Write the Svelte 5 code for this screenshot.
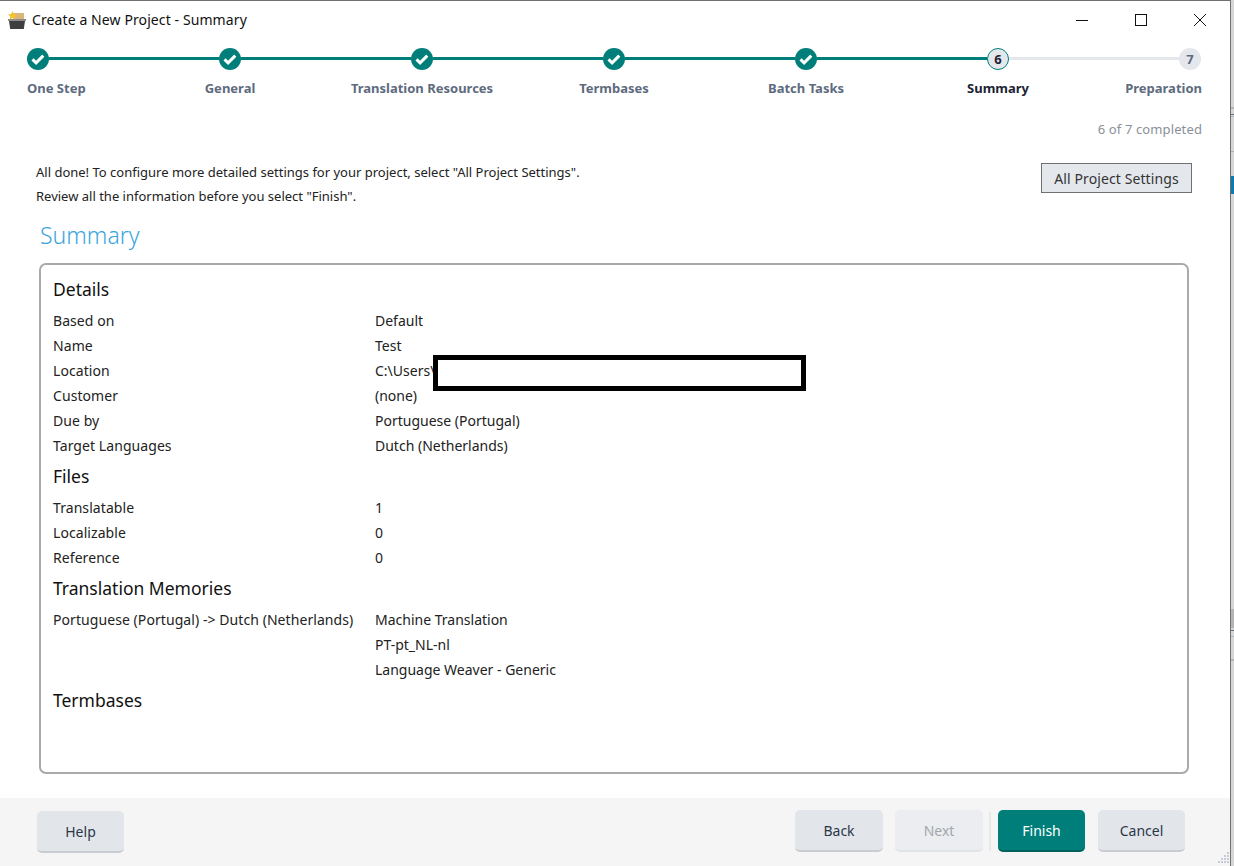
<script>
	const steps = [
		{ name: "One Step", state: "done" },
		{ name: "General", state: "done" },
		{ name: "Translation Resources", state: "done" },
		{ name: "Termbases", state: "done" },
		{ name: "Batch Tasks", state: "done" },
		{ name: "Summary", state: "current", num: 6 },
		{ name: "Preparation", state: "todo", num: 7 }
	];

	const details = [
		["Based on", "Default"],
		["Name", "Test"],
		["Location", "C:\\Users\\"],
		["Customer", "(none)"],
		["Due by", "Portuguese (Portugal)"],
		["Target Languages", "Dutch (Netherlands)"]
	];

	const files = [
		["Translatable", "1"],
		["Localizable", "0"],
		["Reference", "0"]
	];

	const memories = [
		["Portuguese (Portugal) -> Dutch (Netherlands)", "Machine Translation"],
		["", "PT-pt_NL-nl"],
		["", "Language Weaver - Generic"]
	];

	// slivers of whatever window sits behind this one
	const slivers = [
		{ top: 107, h: 2, c: "#b5b5b5" },
		{ top: 114, h: 1, c: "#6a7078" },
		{ top: 116, h: 1, c: "#a9b9c6" },
		{ top: 151, h: 1, c: "#b0b0b0" },
		{ top: 176, h: 18, c: "#0a7ab0" },
		{ top: 609, h: 19, c: "#b4b4b4" },
		{ top: 630, h: 1, c: "#6a7078" },
		{ top: 636, h: 1, c: "#a9b9c6" },
		{ top: 659, h: 2, c: "#b5b5b5" }
	];
</script>

<div class="desktop">
	<div class="window">
		<header class="titlebar">
			<svg class="appicon" width="20" height="20" viewBox="0 0 20 20">
				<path d="M6 3h11v6H6z" fill="#d9b77a" />
				<path d="M1 9h18v2H1z" fill="#8c8c8c" />
				<path d="M2 11h16l-1.2 8H3.2z" fill="#3f3f3f" />
				<path d="M5.5 1l1.4 3 3.1.4-2.3 2.1.6 3.1-2.8-1.6-2.8 1.6.6-3.1L1 4.4 4.1 4z" fill="#f2c230" />
			</svg>
			<span class="title">Create a New Project - Summary</span>
			<div class="winbtns">
				<svg width="14" height="14" viewBox="0 0 14 14"><path d="M1 7.5h12" stroke="#111" stroke-width="1" /></svg>
				<svg width="14" height="14" viewBox="0 0 14 14"><rect x="1.5" y="1.5" width="11" height="11" fill="none" stroke="#111" /></svg>
				<svg width="14" height="14" viewBox="0 0 14 14"><path d="M1 1l12 12M13 1L1 13" stroke="#111" stroke-width="1" /></svg>
			</div>
		</header>

		<ol class="steps">
			{#each steps as step, i}
				{#if i > 0}
					<li class="line" class:off={step.state == "todo"}></li>
				{/if}
				<li class="step {step.state}" class:first={i == 0} class:last={i == steps.length - 1}>
					<span class="dot">
						{#if step.state == "done"}
							<svg width="14" height="14" viewBox="0 0 14 14"><path d="M1.5 7.4l3.6 3.4 7.2-7.2" fill="none" stroke="#fff" stroke-width="3" /></svg>
						{:else}
							{step.num}
						{/if}
					</span>
					<span class="label">{step.name}</span>
				</li>
			{/each}
		</ol>

		<div class="progress">6 of 7 completed</div>

		<div class="intro">
			<div>
				<p>All done! To configure more detailed settings for your project, select "All Project Settings".</p>
				<p>Review all the information before you select "Finish".</p>
			</div>
			<button class="settings">All Project Settings</button>
		</div>

		<h1>Summary</h1>

		<section class="box">
			<h2>Details</h2>
			{#each details as [k, v]}
				<div class="row">
					<span>{k}</span>
					<span class="val">
						{v}
						{#if k == "Location"}<i class="redact"></i>{/if}
					</span>
				</div>
			{/each}
			<h2>Files</h2>
			{#each files as [k, v]}
				<div class="row"><span>{k}</span><span class="val">{v}</span></div>
			{/each}
			<h2>Translation Memories</h2>
			{#each memories as [k, v]}
				<div class="row"><span>{k}</span><span class="val">{v}</span></div>
			{/each}
			<h2>Termbases</h2>
		</section>

		<footer>
			<button class="btn help">Help</button>
			<div class="spacer"></div>
			<button class="btn">Back</button>
			<button class="btn disabled">Next</button>
			<span class="sep"></span>
			<button class="btn primary">Finish</button>
			<button class="btn cancel">Cancel</button>
			<svg class="grip" width="14" height="14" viewBox="0 0 14 14" fill="#c6ccd6">
				<rect x="11" y="1" width="2" height="2" /><rect x="11" y="4" width="2" height="2" /><rect x="8" y="4" width="2" height="2" />
				<rect x="11" y="7" width="2" height="2" /><rect x="8" y="7" width="2" height="2" /><rect x="5" y="7" width="2" height="2" />
				<rect x="11" y="10" width="2" height="2" /><rect x="8" y="10" width="2" height="2" /><rect x="5" y="10" width="2" height="2" /><rect x="2" y="10" width="2" height="2" />
			</svg>
		</footer>
	</div>
	<div class="behind">
		{#each slivers as s}
			<i style="top:{s.top}px;height:{s.h}px;background:{s.c}"></i>
		{/each}
	</div>
</div>

<style>
	:global(body) {
		background: #fff;
	}

	.desktop {
		display: flex;
		width: 1234px;
		height: 866px;
		overflow: hidden;
		font-family: "Noto Sans", "Open Sans", sans-serif;
		font-size: 14px;
		color: #222;
	}

	.window {
		flex: 1;
		display: flex;
		flex-direction: column;
		min-width: 0;
		border-top: 1px solid #707070;
		border-right: 1px solid #707070;
		background: #fff;
	}

	.behind {
		position: relative;
		width: 3px;
		background: #d6d6d6;
	}

	.behind i {
		position: absolute;
		left: 0;
		width: 100%;
	}

	.titlebar {
		display: flex;
		align-items: center;
		height: 37px;
		padding: 0 23px 0 7px;
		flex: none;
	}

	.appicon {
		margin-right: 5px;
	}

	.title {
		font-size: 14px;
		letter-spacing: 0.1px;
		color: #111;
		margin-top: -1px;
	}

	.winbtns {
		margin-left: auto;
		display: flex;
		gap: 45px;
	}

	.steps {
		display: flex;
		list-style: none;
		margin: 10px 0 0;
		padding: 0 29px 0 27px;
		flex: none;
		height: 49px;
	}

	.step {
		width: 22px;
		flex: none;
		display: flex;
		flex-direction: column;
		align-items: center;
	}

	.step.first {
		align-items: flex-start;
	}

	.step.last {
		align-items: flex-end;
	}

	.step.last .label {
		margin-right: -1px;
	}

	.dot {
		width: 22px;
		height: 22px;
		box-sizing: border-box;
		border-radius: 50%;
		display: flex;
		align-items: center;
		justify-content: center;
		font-size: 13px;
		font-weight: 700;
		flex: none;
	}

	.done .dot {
		background: #007f7a;
	}

	.current .dot {
		background: #e4e8ed;
		border: 1px solid #007f7a;
		color: #1c2333;
	}

	.todo .dot {
		background: #e4e8ed;
		color: #5e6a7e;
	}

	.label {
		margin-top: 9px;
		font-size: 13px;
		font-weight: 700;
		white-space: nowrap;
		color: #5e6a7e;
	}

	.current .label {
		color: #1c2333;
	}

	.line {
		flex: 1;
		height: 3px;
		margin-top: 9px;
		background: #007f7a;
	}

	.line.off {
		background: #e4e8ed;
	}

	.progress {
		flex: none;
		text-align: right;
		padding-right: 28px;
		margin-top: 21px;
		font-size: 13px;
		letter-spacing: 0.12px;
		line-height: 22px;
		color: #8a9099;
	}

	.intro {
		flex: none;
		display: flex;
		justify-content: space-between;
		align-items: flex-start;
		padding: 20px 38px 0 36px;
		height: 69px;
		box-sizing: border-box;
	}

	.intro p {
		margin: 0;
		font-size: 13px;
		line-height: 24px;
	}

	.settings {
		width: 151px;
		height: 30px;
		margin-top: 3px;
		font: inherit;
		letter-spacing: 0.1px;
		color: #333;
		background: #e4e8ed;
		border: 1px solid #707070;
		padding: 0;
	}

	h1 {
		flex: none;
		margin: 9px 0 0 40px;
		font-size: 23px;
		line-height: 34px;
		font-weight: 300;
		color: #3aa5dc;
	}

	.box {
		flex: none;
		box-sizing: border-box;
		height: 511px;
		margin: 11px 41px 0 39px;
		padding: 6px 12px;
		border: 2px solid #aaa;
		border-radius: 7px;
	}

	h2 {
		margin: 0;
		font-size: 17.5px;
		line-height: 37px;
		font-weight: 400;
		color: #111;
	}

	.row {
		display: flex;
		height: 25px;
		line-height: 25px;
		font-size: 14px;
	}

	.row span:first-child {
		width: 322px;
		flex: none;
		white-space: nowrap;
		letter-spacing: 0.07px;
	}

	.val {
		position: relative;
	}

	.redact {
		position: absolute;
		left: 58px;
		top: -3px;
		width: 373px;
		height: 36px;
		box-sizing: border-box;
		border: 5px solid #000;
		background: #fff;
	}

	footer {
		margin-top: auto;
		position: relative;
		flex: none;
		height: 68px;
		box-sizing: border-box;
		display: flex;
		align-items: flex-start;
		padding: 12px 45px 0 37px;
		background: #f5f5f5;
	}

	.spacer {
		flex: 1;
	}

	.btn {
		width: 88px;
		height: 42px;
		margin-left: 12px;
		font: inherit;
		color: #2c3648;
		background: #e2e6ea;
		border: none;
		border-bottom: 2px solid #c8cdd3;
		border-radius: 5px;
		padding: 0;
	}

	.btn.help {
		width: 87px;
		margin: 1px 0 0;
	}

	.btn.disabled {
		background: #ebedf0;
		border-bottom-color: #e0e3e7;
		color: #a3a7ad;
	}

	.btn.primary {
		width: 87px;
		background: #007f7a;
		border-bottom-color: #00605c;
		color: #fff;
		margin-left: 0;
	}

	.btn.cancel {
		width: 87px;
		margin-left: 13px;
	}

	.sep {
		width: 2px;
		height: 39px;
		margin: 2px 7px 0 6px;
		background: #e6e8ea;
	}

	.grip {
		position: absolute;
		right: 0;
		bottom: 1px;
	}
</style>
